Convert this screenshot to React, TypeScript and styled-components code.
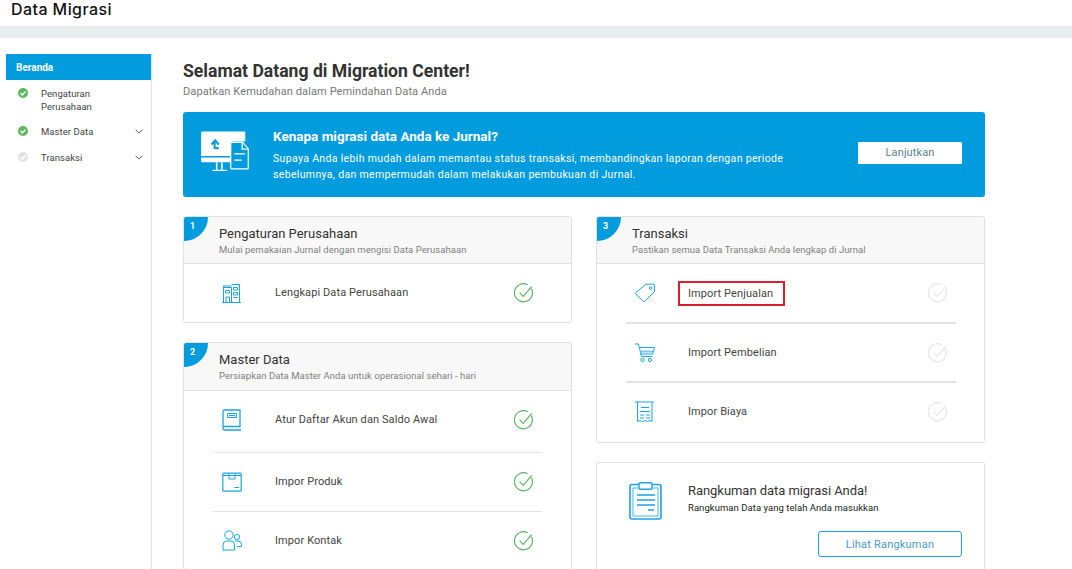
import React from "react";
import styled, { createGlobalStyle } from "styled-components";

const Global = createGlobalStyle`
  html, body { margin: 0; padding: 0; height: 569px; overflow: hidden; background: #fff; }
  body { font-family: Roboto, "Liberation Sans", sans-serif; color: #3a3a3a; }
  * { box-sizing: border-box; }
`;

const Page = styled.div`width: 1072px; height: 569px; overflow: hidden; display: flex; flex-direction: column;`;
const TopBar = styled.header`
  height: 27px; flex: none; padding: 0 0 0 11px; background: #fff; border-bottom: 1px solid #e6e8e8;
  font: 500 16px/18px Inter, Roboto, sans-serif; letter-spacing: .42px; color: #111;
`;
const Band = styled.div`height: 11px; flex: none; background: #ebeeee;`;
const Body = styled.div`flex: 1; display: flex; min-height: 0;`;

const Sidebar = styled.aside`
  width: 146px; margin: 16px 0 0 6px; flex: none; border-right: 1px solid #e2e2e2;
`;
const SideHead = styled.div`
  height: 26px; background: #009cde; color: #fff; font-size: 10px; font-weight: 700;
  display: flex; align-items: center; padding-left: 10px;
`;
const SideList = styled.div`display: flex; flex-direction: column; padding-top: 7px;`;
const SideItem = styled.div<{ $h: number }>`
  height: ${p => p.$h}px; display: flex; align-items: flex-start; padding-left: 12px; padding-right: 8px;
`;
const SideDot = styled.span`width: 23px; flex: none; padding-top: 1px; display: flex;`;
const SideLabel = styled.span`
  flex: 1; font-size: 9.5px; line-height: 13px; color: #444; letter-spacing: .06px;
`;
const Chevron = styled.span`display: flex; padding-top: 4px;`;

const Main = styled.main`flex: 1; padding: 23px 87px 0 31px; min-width: 0; overflow: hidden;`;
const H1 = styled.h1`margin: 0; font-size: 17.6px; line-height: 21px; font-weight: 700; color: #333;`;
const Lead = styled.p`margin: 3px 0 0; font-size: 11px; line-height: 13px; color: #777; letter-spacing: .11px;`;

const Banner = styled.section`
  margin-top: 14px; height: 85px; background: #009cde; border-radius: 3px; color: #fff;
  display: flex; align-items: center; padding: 0 23px 0 18px;
`;
const BannerIcon = styled.div`width: 72px; flex: none; display: flex; padding-bottom: 8px;`;
const BannerText = styled.div`flex: 1; padding-top: 1px;`;
const BannerTitle = styled.div`font-size: 13.5px; line-height: 16px; font-weight: 700; margin-bottom: 7px;`;
const BannerCopy = styled.div`font-size: 10.5px; line-height: 16px; width: 530px; letter-spacing: .34px;`;
const BannerButton = styled.button`
  width: 104px; height: 22px; border: 0; background: #fff; color: #5a7f92; border-radius: 1px;
  font: 400 11px Roboto, sans-serif; letter-spacing: .1px; margin-bottom: 4px; padding: 0;
`;

const Columns = styled.div`display: grid; grid-template-columns: 389px 389px; column-gap: 24px; margin-top: 19px; align-items: start;`;
const Column = styled.div`display: flex; flex-direction: column; gap: 19px;`;

const Card = styled.section`
  position: relative; border: 1px solid #e1e1e1; border-radius: 3px; background: #fff; overflow: hidden;
`;
const CardHead = styled.div<{ $tall?: boolean }>`
  height: ${p => (p.$tall ? 48 : 47)}px; background: #f8f8f8; border-bottom: 1px solid #e1e1e1; padding: 8px 0 0 35px;
`;
const Badge = styled.span`
  position: absolute; left: 0; top: 0; width: 24px; height: 24px; background: #009cde; color: #fff;
  border-bottom-right-radius: 100%; font-size: 9px; font-weight: 700; padding: 3px 0 0 6px; line-height: 12px;
`;
const CardTitle = styled.div`font-size: 13px; line-height: 17px; color: #333;`;
const CardSub = styled.div`font-size: 9.5px; line-height: 12px; color: #808080; margin-top: 2px; letter-spacing: .04px;`;

const Rows = styled.div<{ $wide?: boolean }>`padding: 0 ${p => (p.$wide ? 28 : 29)}px 0 29px;`;
const Row = styled.div<{ $h: number; $thick?: boolean; $last?: boolean; $lift?: number }>`
  height: ${p => p.$h}px; display: flex; align-items: center; padding: 0 8px ${p => p.$lift ?? 0}px 8px;
  border-bottom: ${p => (p.$last ? "0" : p.$thick ? "2px solid #e2e2e2" : "1px solid #e2e2e2")};
`;
const RowIcon = styled.span`width: 54px; flex: none; display: flex; padding-left: 1px;`;
const RowLabel = styled.span`
  flex: 1; font-size: 11px; line-height: 14px; color: #444; letter-spacing: .1px;
`;
const Boxed = styled.span`
  display: inline-block; height: 25px; width: 107px; margin-left: -10px; padding: 3px 0 0 8px; line-height: 16px;
  border: 2px solid #d9202c; font-size: 11px; color: #444;
`;

const Summary = styled.section`
  border: 1px solid #e1e1e1; border-radius: 2px; height: 130px; padding: 19px 22px 0 32px;
`;
const SummaryTop = styled.div`display: flex;`;
const SummaryIcon = styled.span`width: 59px; flex: none; display: flex;`;
const SummaryTitle = styled.div`font-size: 13px; line-height: 16px; color: #333; margin-top: 1px; letter-spacing: -.05px;`;
const SummarySub = styled.div`font-size: 9.5px; line-height: 12px; color: #222; margin-top: 3px; letter-spacing: .05px;`;
const SummaryAction = styled.div`display: flex; justify-content: flex-end; margin-top: 11px;`;
const OutlineButton = styled.button`
  width: 144px; height: 26px; background: #fff; border: 1px solid #1d9fdc; border-radius: 3px; padding: 0;
  color: #4a98c8; font: 400 11px Roboto, sans-serif; letter-spacing: .2px;
`;

const B = "#1ba3e3";

const Dot = ({ on }: { on: boolean }) => (
  <svg width="10" height="10" viewBox="0 0 10 10">
    <circle cx="5" cy="5" r="5" fill={on ? "#5cb85c" : "#e4e4e4"} />
    <path d="M2.6 5.1 4.4 6.9 7.5 3.6" fill="none" stroke="#fff" strokeWidth="1.4" />
  </svg>
);
const Down = () => (
  <svg width="8" height="5" viewBox="0 0 8 5"><path d="M.6.7 4 4.1 7.4.7" fill="none" stroke="#555" strokeWidth="1" /></svg>
);
const Check = ({ on }: { on: boolean }) => {
  const c = on ? "#5cb765" : "#e6e6e6";
  return (
    <svg width="20" height="20" viewBox="0 0 20 20">
      <path d="M17.4 5.6A9 9 0 1 1 13.6 1.8" fill="none" stroke={c} strokeWidth="1.2" />
      <path d="M5.6 9.6 9.2 13.4 17.8 3.4" fill="none" stroke={c} strokeWidth="1.2" />
    </svg>
  );
};

const Ico = ({ children, w = 20, h = 20 }: { children: React.ReactNode; w?: number; h?: number }) => (
  <svg width={w} height={h} viewBox={`0 0 ${w} ${h}`} fill="none" stroke={B} strokeWidth="1">{children}</svg>
);
const Building = () => (
  <Ico>
    <path d="M0 19.5H19M1.5 19V4.5H9.5V19M9.5 1.5H17.5V19M1.5 4.5V3H9.5" />
    <path d="M3.5 7.5H7.5V10H3.5ZM11.5 4.5H15.5V7H11.5ZM11.5 9.5H15.5V12H11.5ZM4 19V14H7.5V19" />
    <path d="M11.5 14.5H15.5" />
  </Ico>
);
const Book = () => (
  <Ico h={22}>
    <path d="M1 18V2.5Q1 1 2.5 1H18V17.5H2.5Q1 17.5 1 19.2T2.5 21H19" strokeWidth="1.3" />
    <path d="M5.5 4.5H14.5V8.5H5.5Z" /><path d="M7 6.5H13" />
  </Ico>
);
const Box = () => (
  <Ico>
    <rect x=".8" y="1.2" width="18.4" height="18" rx="1" strokeWidth="1.2" />
    <path d="M1 3.5H19M7 1.5V7H13V1.5M12.5 15.5H17" />
  </Ico>
);
const People = () => (
  <Ico h={21}>
    <circle cx="7" cy="5" r="4.2" />
    <circle cx="15" cy="7" r="2.6" />
    <path d="M1 20V15Q1 11 5 11H9Q12.5 11 12.5 15V20H1Z" />
    <path d="M13 11H16Q19.5 11 19.5 14.5V16.5H15" />
  </Ico>
);
const Tag = () => (
  <Ico h={20}>
    <path d="M11 1.2H18.5Q19.5 1.2 19.5 2.2V8.5L9.6 18.6Q9 19.2 8.4 18.6L.7 10.8Q.2 10.2.7 9.7Z" />
    <circle cx="15.6" cy="5" r="1.3" />
  </Ico>
);
const Cart = () => (
  <Ico h={20}>
    <path d="M0 1H3.5L6.5 13.5H17.5" />
    <path d="M4 4.5H19.5L17.8 11H5.5" /><path d="M5.5 8.5H18" strokeWidth="2" stroke="#7cc9ec" />
    <circle cx="7.5" cy="17" r="1.7" /><circle cx="15" cy="17" r="1.7" />
  </Ico>
);
const Receipt = () => (
  <Ico h={22}>
    <path d="M0 1H19M2.5 1V20.5L5 19.5 7.5 20.5 10 19.5 12.5 20.5 15 19.5 17 20.5V1" />
    <path d="M6 6.5H14M4.5 10.5H15M5 14H9M11 14H15M5 17H9M11 17H15" />
  </Ico>
);
const Clipboard = () => (
  <svg width="33" height="38" viewBox="0 0 33 38" fill="none" stroke={B}>
    <rect x="1" y="2.5" width="31" height="34.5" rx="2" strokeWidth="1.6" />
    <rect x="4" y="6" width="25" height="28" strokeWidth=".8" />
    <rect x="10" y=".8" width="13" height="6.5" rx="1.2" fill="#fff" strokeWidth="1.4" />
    <path d="M8 13H26M8 18H26M8 23H26M19 28H25" strokeWidth="1.4" />
  </svg>
);
const Migrate = () => (
  <svg width="48" height="40" viewBox="2 0 46 38.5">
    <path d="M2 1.5Q2 .5 3 .5H44Q44.5.5 44.5 1.5V10H32V24H2Z" fill="#fff" />
    <path d="M2 25.5H31V30H3Q2 30 2 29Z" fill="#fff" />
    <path d="M17 30V37M22 30V37M13 38H27" stroke="#fff" strokeWidth="1.5" fill="none" />
    <path d="M15 17V10.5M12 13 15.5 9 19 13M15 16.5H19" stroke="#009cde" strokeWidth="2" fill="none" />
    <path d="M31.5 11H42L47.4 17V35.5Q47.4 36.5 46.4 36.5H31.5Q30.5 36.5 30.5 35.5V12Q30.5 11 31.5 11Z" fill="#009cde" stroke="#fff" strokeWidth="1.2" />
    <path d="M41.5 11.5V17.5H47" fill="none" stroke="#fff" strokeWidth="1.2" />
    <path d="M34 22H44.5M34 28H41" fill="none" stroke="#fff" strokeWidth="1.3" />
  </svg>
);

export default function App() {
  return (
    <Page>
      <Global />
      <TopBar>Data Migrasi</TopBar>
      <Band />
      <Body>
        <Sidebar>
          <SideHead>Beranda</SideHead>
          <SideList>
            <SideItem $h={38}><SideDot><Dot on /></SideDot><SideLabel>Pengaturan<br />Perusahaan</SideLabel></SideItem>
            <SideItem $h={26}><SideDot><Dot on /></SideDot><SideLabel>Master Data</SideLabel><Chevron><Down /></Chevron></SideItem>
            <SideItem $h={26}><SideDot><Dot on={false} /></SideDot><SideLabel>Transaksi</SideLabel><Chevron><Down /></Chevron></SideItem>
          </SideList>
        </Sidebar>
        <Main>
          <H1>Selamat Datang di Migration Center!</H1>
          <Lead>Dapatkan Kemudahan dalam Pemindahan Data Anda</Lead>
          <Banner>
            <BannerIcon><Migrate /></BannerIcon>
            <BannerText>
              <BannerTitle>Kenapa migrasi data Anda ke Jurnal?</BannerTitle>
              <BannerCopy>Supaya Anda lebih mudah dalam memantau status transaksi, membandingkan laporan dengan periode sebelumnya, dan mempermudah dalam melakukan pembukuan di Jurnal.</BannerCopy>
            </BannerText>
            <BannerButton>Lanjutkan</BannerButton>
          </Banner>
          <Columns>
            <Column>
              <Card>
                <Badge>1</Badge>
                <CardHead>
                  <CardTitle>Pengaturan Perusahaan</CardTitle>
                  <CardSub>Mulai pemakaian Jurnal dengan mengisi Data Perusahaan</CardSub>
                </CardHead>
                <Rows>
                  <Row $h={58} $last><RowIcon><Building /></RowIcon><RowLabel>Lengkapi Data Perusahaan</RowLabel><Check on /></Row>
                </Rows>
              </Card>
              <Card>
                <Badge>2</Badge>
                <CardHead $tall>
                  <CardTitle>Master Data</CardTitle>
                  <CardSub>Persiapkan Data Master Anda untuk operasional sehari - hari</CardSub>
                </CardHead>
                <Rows>
                  <Row $h={62} $lift={4}><RowIcon><Book /></RowIcon><RowLabel>Atur Daftar Akun dan Saldo Awal</RowLabel><Check on /></Row>
                  <Row $h={59}><RowIcon><Box /></RowIcon><RowLabel>Impor Produk</RowLabel><Check on /></Row>
                  <Row $h={57} $last><RowIcon><People /></RowIcon><RowLabel>Impor Kontak</RowLabel><Check on /></Row>
                </Rows>
              </Card>
            </Column>
            <Column>
              <Card>
                <Badge>3</Badge>
                <CardHead>
                  <CardTitle>Transaksi</CardTitle>
                  <CardSub>Pastikan semua Data Transaksi Anda lengkap di Jurnal</CardSub>
                </CardHead>
                <Rows $wide>
                  <Row $h={60} $thick><RowIcon><Tag /></RowIcon><RowLabel><Boxed>Import Penjualan</Boxed></RowLabel><Check on={false} /></Row>
                  <Row $h={59} $thick><RowIcon><Cart /></RowIcon><RowLabel>Import Pembelian</RowLabel><Check on={false} /></Row>
                  <Row $h={59} $last $lift={2}><RowIcon><Receipt /></RowIcon><RowLabel>Impor Biaya</RowLabel><Check on={false} /></Row>
                </Rows>
              </Card>
              <Summary>
                <SummaryTop>
                  <SummaryIcon><Clipboard /></SummaryIcon>
                  <div>
                    <SummaryTitle>Rangkuman data migrasi Anda!</SummaryTitle>
                    <SummarySub>Rangkuman Data yang telah Anda masukkan</SummarySub>
                  </div>
                </SummaryTop>
                <SummaryAction><OutlineButton>Lihat Rangkuman</OutlineButton></SummaryAction>
              </Summary>
            </Column>
          </Columns>
        </Main>
      </Body>
    </Page>
  );
}
